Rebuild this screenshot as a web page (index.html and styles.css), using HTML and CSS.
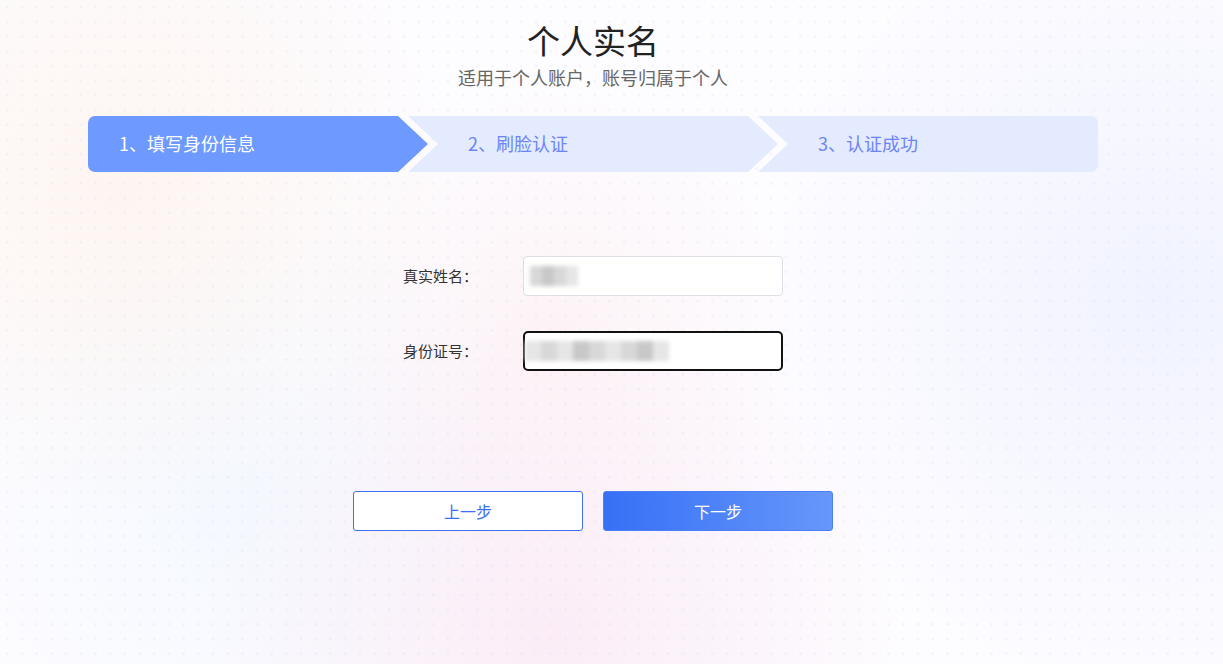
FILE: index.html
```html
<!DOCTYPE html>
<html lang="zh">
<head>
<meta charset="utf-8">
<title>个人实名</title>
<link rel="stylesheet" href="styles.css">
</head>
<body>
<div class="page">
  <div class="wrap">
    <h1 class="title">个人实名</h1>
    <p class="subtitle">适用于个人账户，账号归属于个人</p>
    <div class="steps">
      <div class="step step-first active">1、填写身份信息</div>
      <div class="step step-mid">2、刷脸认证</div>
      <div class="step step-last">3、认证成功</div>
    </div>
    <div class="form">
      <div class="row">
        <label class="label">真实姓名：</label>
        <div class="input">
          <span class="blur blur-name"><i></i><i class="d"></i><i></i><i class="l"></i></span>
        </div>
      </div>
      <div class="row">
        <label class="label">身份证号：</label>
        <div class="input focused">
          <span class="blur blur-id"><i class="l"></i><i></i><i class="l"></i><i class="d"></i><i></i><i class="l"></i><i></i><i class="d"></i><i class="l"></i></span>
        </div>
      </div>
    </div>
    <div class="actions">
      <button class="btn btn-prev">上一步</button>
      <button class="btn btn-next">下一步</button>
    </div>
  </div>
</div>
</body>
</html>
```
FILE: styles.css
```css
* { box-sizing: border-box; }
html, body { margin: 0; padding: 0; }
body {
  width: 1223px;
  height: 664px;
  overflow: hidden;
  font-family: "Noto Sans CJK SC", "Liberation Sans", sans-serif;
  background:
    radial-gradient(circle at 10% 28%, rgba(255, 238, 226, 0.5) 0, rgba(255, 238, 226, 0) 28%),
    radial-gradient(circle at 45% 95%, rgba(250, 228, 242, 0.65) 0, rgba(250, 228, 242, 0) 38%),
    radial-gradient(circle at 45% 50%, rgba(253, 236, 238, 0.5) 0, rgba(253, 236, 238, 0) 33%),
    radial-gradient(circle at 95% 45%, rgba(234, 238, 255, 0.65) 0, rgba(234, 238, 255, 0) 33%),
    radial-gradient(circle at 20% 75%, rgba(240, 247, 255, 0.7) 0, rgba(240, 247, 255, 0) 28%),
    #fdfcff;
}
.page {
  width: 100%;
  height: 100%;
  background-image: radial-gradient(circle, rgba(220, 220, 245, 0.3) 1px, rgba(0,0,0,0) 1.6px);
  background-size: 14.7px 14.7px;
  background-position: 0 0;
  padding-top: 20px;
}
.wrap {
  width: 1010px;
  margin-left: 88px;
  display: flex;
  flex-direction: column;
  align-items: center;
}
.title {
  margin: 0;
  font-size: 33px;
  line-height: 40px;
  font-weight: 400;
  color: #222;
}
.subtitle {
  margin: 6px 0 0;
  font-size: 18px;
  line-height: 22px;
  color: #666;
}
.steps {
  margin-top: 28px;
  width: 100%;
  height: 56px;
  display: flex;
}
.step {
  height: 56px;
  display: flex;
  align-items: center;
  padding-bottom: 3px;
  font-size: 18px;
  color: #6b84f7;
  background: #e4ebfe;
}
.step-first {
  width: 340px;
  padding-left: 31px;
  border-radius: 7px 0 0 7px;
  clip-path: polygon(0 0, calc(100% - 30px) 0, 100% 50%, calc(100% - 30px) 100%, 0 100%);
}
.step-mid {
  width: 370px;
  margin-left: -20px;
  padding-left: 60px;
  clip-path: polygon(0 0, calc(100% - 30px) 0, 100% 50%, calc(100% - 30px) 100%, 0 100%, 30px 50%);
}
.step-last {
  width: 340px;
  margin-left: -20px;
  padding-left: 60px;
  border-radius: 0 7px 7px 0;
  clip-path: polygon(0 0, 100% 0, 100% 100%, 0 100%, 30px 50%);
}
.step.active {
  background: #6e99fe;
  color: #fff;
}
.form {
  margin-top: 84px;
  width: 380px;
  display: flex;
  flex-direction: column;
  gap: 35px;
}
.row {
  display: flex;
  align-items: center;
}
.label {
  width: 120px;
  font-size: 15px;
  color: #333;
  padding-bottom: 2px;
}
.input {
  width: 260px;
  height: 40px;
  border: 1px solid #dcdfe6;
  border-radius: 4px;
  background: #fff;
  display: flex;
  align-items: center;
  padding-left: 4px;
}
.input.focused {
  border: 2px solid #111;
  border-radius: 5px;
  padding-left: 0;
}
.blur {
  display: flex;
  filter: blur(2.2px);
}
.blur i {
  display: block;
  width: 12px;
  height: 20px;
  background: #d8d8d8;
}
.blur i.d { background: #c8c8c8; }
.blur i.l { background: #e6e6e6; }
.blur-name { margin-left: 2px; }
.blur-id i { width: 16px; }
.actions {
  margin-top: 120px;
  display: flex;
  gap: 20px;
}
.btn {
  width: 230px;
  height: 40px;
  border-radius: 3px;
  font-family: "Noto Sans CJK SC", "Liberation Sans", sans-serif;
  font-size: 16px;
  padding-bottom: 2px;
  cursor: pointer;
}
.btn-prev {
  background: #fff;
  border: 1px solid #3b6ff5;
  color: #3b6ff5;
}
.btn-next {
  border: 1px solid #4a7ff7;
  background: linear-gradient(90deg, #3670f5 0%, #6797fb 100%);
  color: #fff;
}
```
